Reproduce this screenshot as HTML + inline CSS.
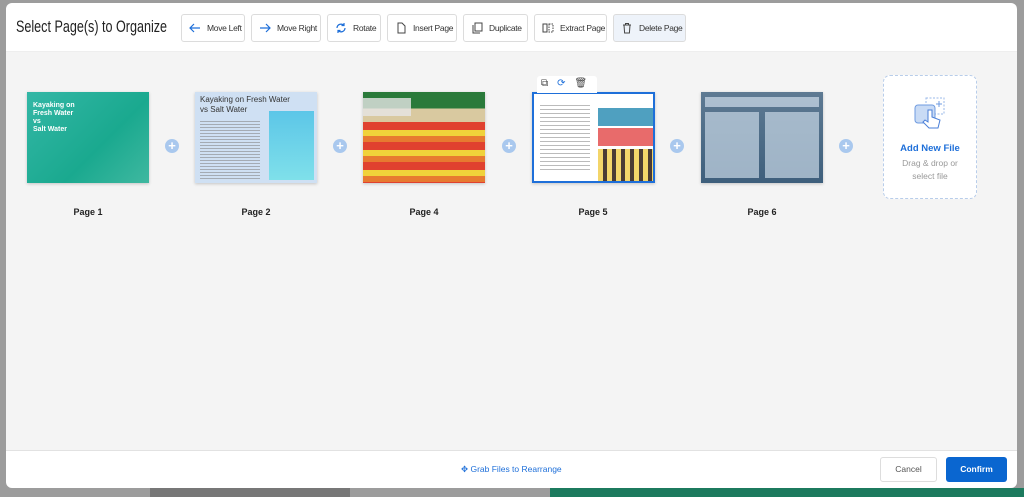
<!DOCTYPE html>
<html><head><style>
*{box-sizing:border-box;margin:0;padding:0}
body{width:1024px;height:497px;overflow:hidden;background:#9c9c9c;font-family:"Liberation Sans",sans-serif;position:relative}
.modal{position:absolute;left:6px;top:3px;width:1011px;height:485px;background:#fff;border-radius:6px;overflow:hidden}
.body{position:absolute;left:0;top:48px;width:100%;height:400px;background:#f4f4f4;border-top:1px solid #eee;border-bottom:1px solid #e2e2e2}
h1{position:absolute;left:10px;top:14px;font-size:17px;font-weight:normal;color:#222;white-space:nowrap;transform:scaleX(0.74);transform-origin:left top}
.btn{position:absolute;top:11px;height:28px;border:1px solid #dcdcdc;border-radius:3px;background:#fff;font-size:8.5px;letter-spacing:-0.3px;color:#333;display:flex;align-items:center;padding-left:7px;gap:6px;white-space:nowrap}
.btn svg{width:12px;height:12px;flex:none}
.th{position:absolute;top:89px;width:122px;height:91px;box-shadow:0 1px 3px rgba(0,0,0,.2);overflow:hidden}
.lbl{position:absolute;top:204px;width:122px;text-align:center;font-size:9px;color:#222;font-weight:bold}
.plus{position:absolute;top:136px;width:14px;height:14px;border-radius:50%;background:#a9c8ee;color:#fff;font-size:13px;line-height:14px;text-align:center;font-weight:bold}
</style></head><body>
<div style="position:absolute;left:150px;top:488px;width:200px;height:9px;background:#777"></div>
<div style="position:absolute;left:550px;top:488px;width:474px;height:9px;background:#1c7a5e"></div>
<div class="modal">
<h1>Select Page(s) to Organize</h1>
<div class="btn" style="left:175px;width:64px"><svg viewBox="0 0 12 12"><path d="M11 6H1M5 2L1 6l4 4" stroke="#1e6fd9" fill="none" stroke-width="1.2"/></svg>Move Left</div>
<div class="btn" style="left:245px;width:70px"><svg viewBox="0 0 12 12"><path d="M1 6h10M7 2l4 4-4 4" stroke="#1e6fd9" fill="none" stroke-width="1.2"/></svg>Move Right</div>
<div class="btn" style="left:321px;width:54px"><svg viewBox="0 0 12 12"><path d="M2 6a4 4 0 0 1 7-2.5M10 6a4 4 0 0 1-7 2.5M9 1v2.5H6.5M3 11V8.5h2.5" stroke="#1e6fd9" fill="none" stroke-width="1.2"/></svg>Rotate</div>
<div class="btn" style="left:381px;width:70px"><svg viewBox="0 0 12 12"><path d="M3 1h4l3 3v7H3z" stroke="#444" fill="none"/></svg>Insert Page</div>
<div class="btn" style="left:457px;width:65px"><svg viewBox="0 0 12 12"><rect x="4" y="1" width="7" height="8" stroke="#444" fill="none"/><path d="M2 3v8h7" stroke="#444" fill="none"/></svg>Duplicate</div>
<div class="btn" style="left:528px;width:73px"><svg viewBox="0 0 12 12"><rect x="1" y="2" width="4" height="8" stroke="#444" fill="none"/><rect x="7" y="2" width="4" height="8" stroke="#444" fill="none" stroke-dasharray="1.5 1"/></svg>Extract Page</div>
<div class="btn" style="left:607px;width:73px;background:#eef3fa"><svg viewBox="0 0 12 12"><path d="M2 3h8M4.5 3V1.5h3V3M3 3l.6 8h4.8L9 3" stroke="#444" fill="none"/></svg>Delete Page</div>
<div class="body"></div>
<div class="th" style="left:21px;background:linear-gradient(135deg,#33b7a6,#1aa98f 60%,#3fb8a0)"><div style="color:#fff;font-size:7px;font-weight:bold;padding:10px 0 0 6px;line-height:8px">Kayaking on<br>Fresh Water<br>vs<br>Salt Water</div></div>
<div class="th" style="left:189px;background:#cfe0f3"><div style="font-size:8px;color:#333;padding:3px 5px;line-height:10px">Kayaking on Fresh Water<br>vs Salt Water</div><div style="position:absolute;left:5px;top:27px;width:60px;height:60px;background:repeating-linear-gradient(#cfe0f3 0 2px,#888 2px 3px);opacity:.6"></div><div style="position:absolute;left:74px;top:19px;width:45px;height:69px;background:linear-gradient(#5cc6e8,#7fe0ea)"></div></div>
<div class="th" style="left:357px;background:linear-gradient(#2a7a3a 0 18%,#d9c9a0 18%)"><div style="position:absolute;left:0;top:30px;width:100%;height:61px;background:repeating-linear-gradient(#e0412f 0 8px,#f0d23a 8px 14px,#e77a30 14px 20px)"></div><div style="position:absolute;left:0;top:6px;width:48px;height:18px;background:rgba(230,230,230,.8)"></div></div>
<div class="th" style="left:526px;width:123px;border:2px solid #1e6fd9;background:#fff"><div style="position:absolute;left:6px;top:8px;width:50px;height:70px;background:repeating-linear-gradient(#fff 0 3px,#bbb 3px 4px)"></div><div style="position:absolute;left:64px;top:14px;width:55px;height:18px;background:#4fa0c0"></div><div style="position:absolute;left:64px;top:34px;width:55px;height:18px;background:#e86b6b"></div><div style="position:absolute;left:64px;top:55px;width:55px;height:32px;background:repeating-linear-gradient(90deg,#f3d56a 0 5px,#4a3a34 5px 9px)"></div></div>
<div style="position:absolute;left:531px;top:73px;width:60px;height:17px;background:#fff;border-radius:3px 3px 0 0;font-size:10px;color:#444;display:flex;gap:9px;padding:2px 4px"><span>⧉</span><span style="color:#1e6fd9">⟳</span><span>🗑</span></div>
<div class="th" style="left:695px;background:linear-gradient(#5e7a93,#3e5f7c)"><div style="position:absolute;left:4px;top:5px;width:114px;height:10px;background:rgba(200,215,230,.75)"></div><div style="position:absolute;left:4px;top:20px;width:54px;height:66px;background:rgba(200,215,230,.7)"></div><div style="position:absolute;left:64px;top:20px;width:54px;height:66px;background:rgba(200,215,230,.7)"></div></div>
<div class="plus" style="left:159px">+</div><div class="plus" style="left:327px">+</div><div class="plus" style="left:496px">+</div><div class="plus" style="left:664px">+</div><div class="plus" style="left:833px">+</div>
<div class="lbl" style="left:21px">Page 1</div><div class="lbl" style="left:189px">Page 2</div><div class="lbl" style="left:357px">Page 4</div><div class="lbl" style="left:526px">Page 5</div><div class="lbl" style="left:695px">Page 6</div>
<div style="position:absolute;left:877px;top:72px;width:94px;height:124px;border:1px dashed #b8cdea;border-radius:7px;background:#fff;text-align:center">
<svg width="36" height="34" viewBox="0 0 36 34" style="margin-top:20px"><rect x="14" y="2" width="18" height="16" fill="none" stroke="#9ab8e8" stroke-dasharray="2 1.5"/><rect x="3" y="9" width="20" height="18" rx="3" fill="#c9dbf5" stroke="#6f9be0"/><path d="M16 14v12l-3-2-2 2 6 6h9l2-8-8-3v-7z" fill="#fff" stroke="#4a7fd8"/><path d="M27 5v6M24 8h6" stroke="#6f9be0"/></svg>
<div style="color:#1e6fd9;font-weight:bold;font-size:9.5px;margin-top:8px">Add New File</div>
<div style="color:#999;font-size:8.5px;line-height:13px;margin-top:3px">Drag &amp; drop or<br>select file</div></div>
<div style="position:absolute;left:455px;top:461px;font-size:8.5px;color:#1e6fd9">✥ Grab Files to Rearrange</div>
<div style="position:absolute;left:874px;top:454px;width:57px;height:25px;border:1px solid #ddd;border-radius:3px;font-size:8.5px;color:#555;text-align:center;line-height:23px">Cancel</div>
<div style="position:absolute;left:940px;top:454px;width:61px;height:25px;background:#0a66d0;border-radius:3px;font-size:8.5px;color:#fff;text-align:center;line-height:25px;font-weight:bold">Confirm</div>
</div>
</body></html>
